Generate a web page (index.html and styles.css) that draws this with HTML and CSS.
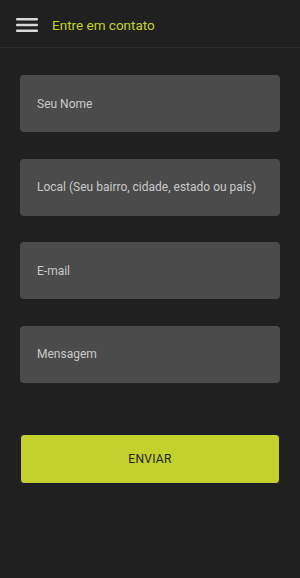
FILE: index.html
```html
<!DOCTYPE html>
<html lang="pt">
<head>
    <meta charset="UTF-8">
    <meta name="viewport" content="width=device-width, initial-scale=1.0">
    <title>Entre em contato</title>
    <link rel="stylesheet" href="styles.css">
</head>
<body>
    <header class="topbar">
        <button class="menu-btn" aria-label="Menu">
            <svg width="22" height="16" viewBox="0 0 22 16">
                <rect x="0" y="1" width="22" height="2.4" rx="1" fill="#d8d8d8"/>
                <rect x="0" y="6.8" width="22" height="2.4" rx="1" fill="#d8d8d8"/>
                <rect x="0" y="12.6" width="22" height="2.4" rx="1" fill="#d8d8d8"/>
            </svg>
        </button>
        <h1 class="title">Entre em contato</h1>
    </header>

    <!-- Formulario de contato -->
    <form class="contato-form" onsubmit="return false">
        <input class="campo" type="text" placeholder="Seu Nome">
        <input class="campo" type="text" placeholder="Local (Seu bairro, cidade, estado ou país)">
        <input class="campo" type="email" placeholder="E-mail">
        <input class="campo" type="text" placeholder="Mensagem">
        <button class="btn-enviar" type="submit">ENVIAR</button>
    </form>
</body>
</html>
```

FILE: styles.css
```css
body {
    margin: 0;
    background-color: #202020;
    font-family: Roboto, "Noto Sans", sans-serif;
    height: 578px;
}
.topbar {
    display: flex;
    align-items: center;
    height: 48px;
    padding: 3px 16px 0;
    border-bottom: 1px solid #2c2c2c;
    box-sizing: border-box;
}
.menu-btn {
    background: none;
    border: none;
    padding: 0;
    width: 22px;
    height: 16px;
    margin-right: 14px;
    display: flex;
}
.title {
    margin: 0;
    font-size: 13.5px;
    font-weight: 400;
    color: #c3d12b;
}
.contato-form {
    display: flex;
    flex-direction: column;
    padding: 27px 20px 0;
}
.campo {
    height: 57px;
    margin-bottom: 26.5px;
    padding: 0 2px 0 17px;
    border: none;
    border-radius: 4px;
    background-color: #4b4b4b;
    color: #e0e0e0;
    font-family: Roboto, "Noto Sans", sans-serif;
    font-size: 12px;
    outline: none;
}
.campo::placeholder {
    color: #c9c9c9;
}
.btn-enviar {
    margin-top: 25px;
    height: 50px;
    border: 1px solid #1a1a2a;
    border-radius: 4px;
    background-color: #c2d12c;
    color: #222222;
    font-family: Roboto, "Noto Sans", sans-serif;
    font-size: 12px;
    letter-spacing: 0.3px;
    cursor: pointer;
}
```
